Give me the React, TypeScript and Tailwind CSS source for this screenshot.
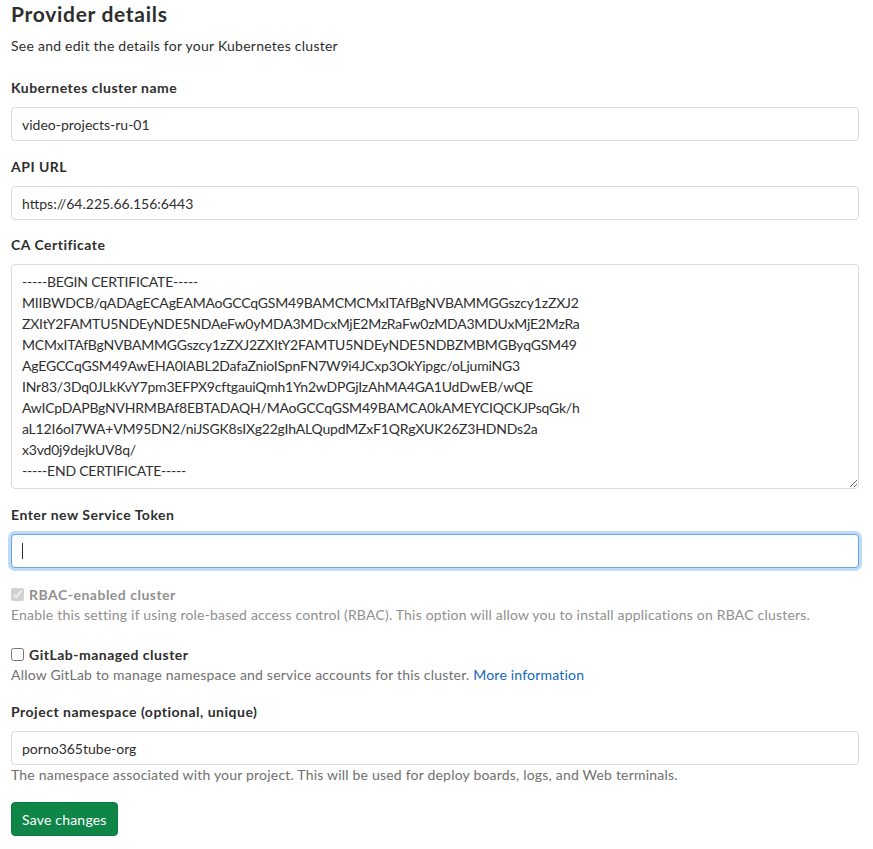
import React from "react";

const cert = `-----BEGIN CERTIFICATE-----
MIIBWDCB/qADAgECAgEAMAoGCCqGSM49BAMCMCMxITAfBgNVBAMMGGszcy1zZXJ2
ZXItY2FAMTU5NDEyNDE5NDAeFw0yMDA3MDcxMjE2MzRaFw0zMDA3MDUxMjE2MzRa
MCMxITAfBgNVBAMMGGszcy1zZXJ2ZXItY2FAMTU5NDEyNDE5NDBZMBMGByqGSM49
AgEGCCqGSM49AwEHA0IABL2DafaZnioISpnFN7W9i4JCxp3OkYipgc/oLjumiNG3
INr83/3Dq0JLkKvY7pm3EFPX9cftgauiQmh1Yn2wDPGjIzAhMA4GA1UdDwEB/wQE
AwICpDAPBgNVHRMBAf8EBTADAQH/MAoGCCqGSM49BAMCA0kAMEYCIQCKJPsqGk/h
aL12I6oI7WA+VM95DN2/niJSGK8sIXg22gIhALQupdMZxF1QRgXUK26Z3HDNDs2a
x3vd0j9dejkUV8q/
-----END CERTIFICATE-----`;

const inputCls =
  "block w-full h-[34px] px-[10px] border border-[#dbdbdb] rounded-[4px] bg-white text-[14px] text-[#2e2e2e] outline-none";

function Label({ children }: { children: React.ReactNode }) {
  return (
    <label className="block text-[14px] leading-[20px] font-bold tracking-[0.5px] text-[#2e2e2e] mb-[9px]">
      {children}
    </label>
  );
}

export default function App() {
  return (
    <div
      className="bg-white pl-[11px] pr-[14px] pb-[14px] text-[#2e2e2e]"
      style={{ fontFamily: "Lato, 'Noto Sans', sans-serif" }}
    >
      <h2 className="text-[21px] leading-[28px] font-bold tracking-[0.7px] text-[#2e2e2e]">
        Provider details
      </h2>
      <p className="mt-[8px] text-[14px] leading-[20px] tracking-[0.25px]">
        See and edit the details for your Kubernetes cluster
      </p>

      <div className="mt-[22px]">
        <Label>Kubernetes cluster name</Label>
        <input className={inputCls} defaultValue="video-projects-ru-01" />
      </div>

      <div className="mt-[16px]">
        <Label>API URL</Label>
        <input className={inputCls} defaultValue="https://64.225.66.156:6443" />
      </div>

      <div className="mt-[15px]">
        <Label>CA Certificate</Label>
        <textarea
          className="block w-full h-[225px] px-[10px] pt-[6px] border border-[#dbdbdb] rounded-[4px] bg-white text-[14px] leading-[21px] tracking-[-0.2px] text-[#2e2e2e] outline-none resize-y"
          defaultValue={cert}
        />
      </div>

      <div className="mt-[16px]">
        <Label>Enter new Service Token</Label>
        <div className="relative">
          <input className="block w-full h-[34px] px-[10px] border border-[#63a6e9] rounded-[4px] bg-white text-[14px] outline-none shadow-[0_0_0_3px_rgba(99,166,233,0.4)]" />
          <span className="absolute left-[11px] top-[9px] w-px h-[16px] bg-[#2e2e2e]" />
        </div>
      </div>

      <div className="mt-[16px] tracking-[0.2px]">
        <label className="flex items-center gap-[5px] text-[14px] leading-[21px] font-bold tracking-[0.5px] text-[#919191]">
          <input type="checkbox" checked disabled readOnly className="m-0 w-[13px] h-[13px]" />
          RBAC-enabled cluster
        </label>
        <p className="text-[14px] leading-[20px] text-[#8f8f8f]">
          Enable this setting if using role-based access control (RBAC). This option will allow
          you to install applications on RBAC clusters.
        </p>
      </div>

      <div className="mt-[19px] tracking-[0.2px]">
        <label className="flex items-center gap-[5px] text-[14px] leading-[21px] font-bold tracking-[0.5px] text-[#2e2e2e]">
          <input type="checkbox" className="m-0 w-[13px] h-[13px]" />
          GitLab-managed cluster
        </label>
        <p className="text-[14px] leading-[20px] text-[#707070]">
          Allow GitLab to manage namespace and service accounts for this cluster.{" "}
          <a href="#" className="text-[#1068bf]">
            More information
          </a>
        </p>
      </div>

      <div className="mt-[17px]">
        <Label>Project namespace (optional, unique)</Label>
        <input className={inputCls} defaultValue="porno365tube-org" />
        <p className="text-[14px] leading-[20px] tracking-[0.2px] text-[#707070]">
          The namespace associated with your project. This will be used for deploy boards, logs,
          and Web terminals.
        </p>
      </div>

      <button className="mt-[17px] h-[34px] px-[10px] rounded-[4px] bg-[#108548] text-white text-[14px] tracking-[0.2px] border border-[#0d7a40]">
        Save changes
      </button>
    </div>
  );
}
